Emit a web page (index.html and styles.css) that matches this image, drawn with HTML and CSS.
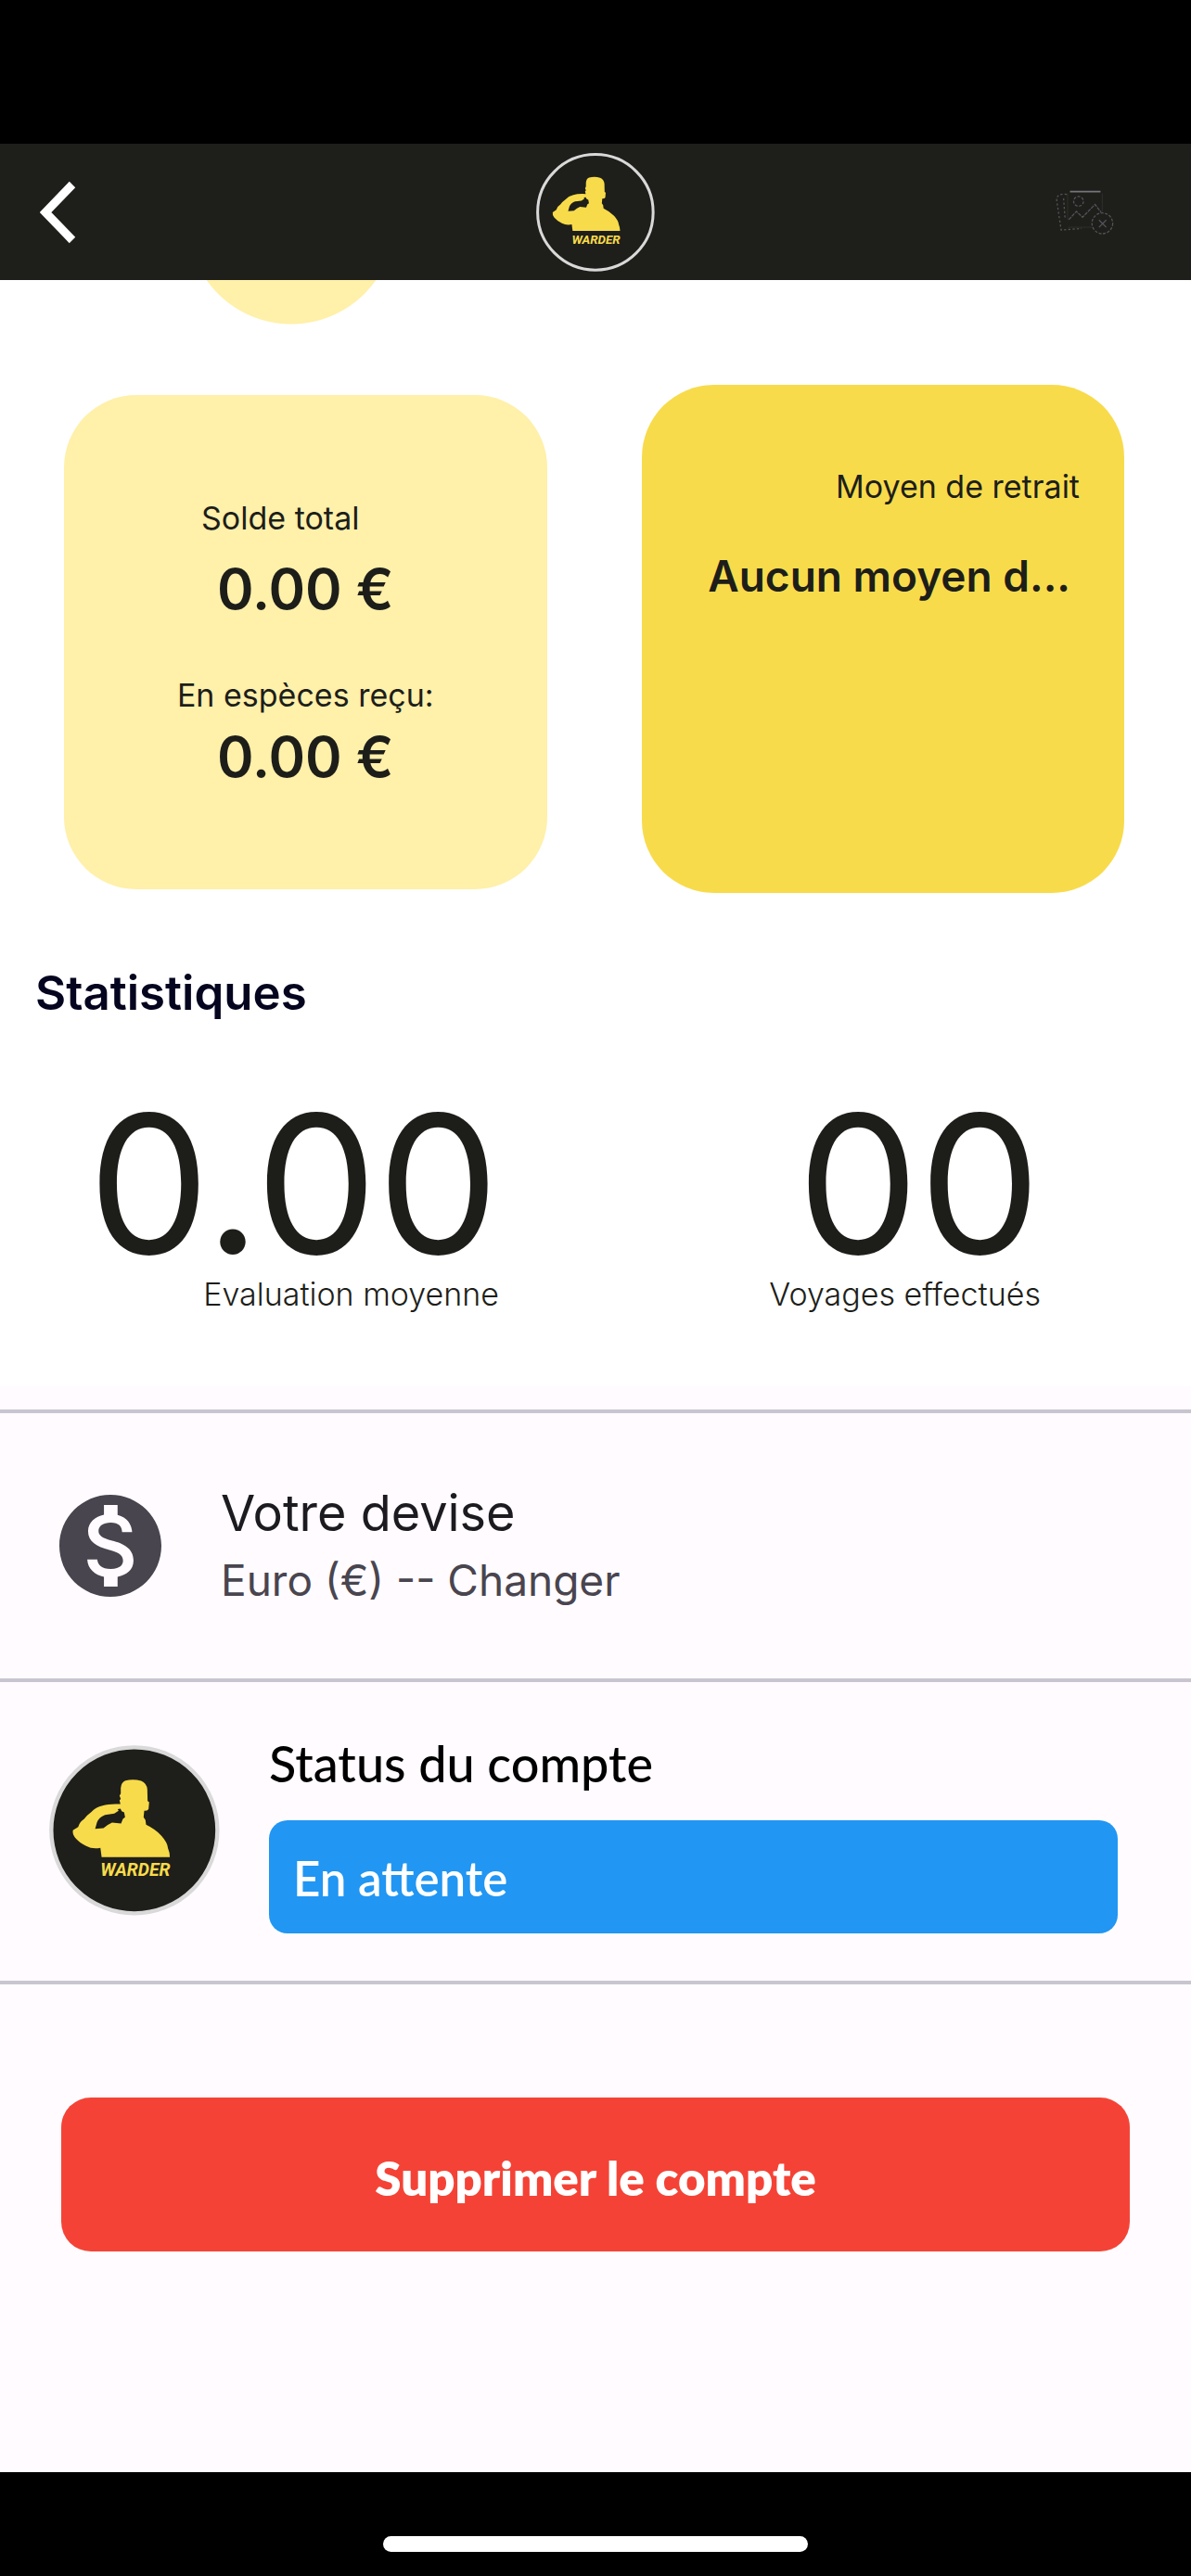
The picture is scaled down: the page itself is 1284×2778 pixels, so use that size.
FILE: index.html
```html
<!DOCTYPE html>
<html lang="fr">
<head>
    <meta charset="UTF-8">
    <meta name="viewport" content="width=device-width, initial-scale=1.0">
    <title>Warder - Mon compte</title>
    <link rel="stylesheet" href="styles.css">
</head>
<body>
    <!-- Shared logo artwork -->
    <svg class="sprite" aria-hidden="true">
        <symbol id="warder" viewBox="38 68 553 553">
            <circle class="logo-disc" cx="314" cy="344" r="269"/>
            <path class="logo-man" d="M208 431 L204 401 Q178 406 158 395 Q135 384 122 368 Q113 357 115 344 L132 333 Q138 315 151 308 Q161 294 174 285 Q189 269 211 264 Q232 257 269 259 L266 247 L270 242 L266 232 L270 225 L270 207 Q271 189 285 183 Q311 176 336 184 Q354 192 356 211 L357 249 L362 253 L360 275 L355 280 L346 281 L344 302 L350 311 L352 326 Q381 340 401 361 Q421 383 423 402 Q429 415 429 431 Z M187 339 L214 337 Q228 325 242 319 L271 322 L277 307 L284 302 L281 286 L273 282 L269 274 L260 275 L263 281 L249 290 L219 294 Q199 302 193 318 Z" fill-rule="evenodd"/>
            <text class="logo-text" x="317" y="492" text-anchor="middle">WARDER</text>
        </symbol>
    </svg>

    <div class="status-bar"></div>

    <header class="app-bar">
        <button class="back" type="button" aria-label="Retour">
            <svg width="39" height="68" viewBox="0 0 39 68"><path d="M35 4 L6 34 L35 64" fill="none" stroke="#fff" stroke-width="9"/></svg>
        </button>
        <svg class="logo" role="img" aria-label="Warder"><use href="#warder"/></svg>
        <svg class="missing" viewBox="78 82 194 152" aria-hidden="true">
            <path d="M128 90 H228" stroke="#77757b" stroke-width="5"/>
            <g fill="none" stroke="#53525a" stroke-width="4">
                <path d="M120 96 V182 M234 96 V156 M122 207 H204" stroke="#2b2b29"/>
                <path d="M118 99 Q80 94 85 122 L99 216 L166 211 M107 112 L112 180" stroke-dasharray="7 7"/>
                <circle cx="156" cy="122" r="16" stroke-dasharray="9 5"/>
                <path d="M124 182 L149 155 L169 174 L210 132 L230 158" stroke-dasharray="12 3"/>
                <circle cx="234" cy="194" r="34" stroke-dasharray="9 5"/>
                <path d="M223 183 L247 207 M247 183 L223 207"/>
            </g>
        </svg>
    </header>

    <main class="content">
        <section class="overview">
            <div class="bubble-clip"><div class="bubble"></div></div>

            <div class="cards">
                <div class="card card-balance">
                    <p class="label label-total">Solde total</p>
                    <p class="amount">0.00 €</p>
                    <p class="label label-cash">En espèces reçu:</p>
                    <p class="amount">0.00 €</p>
                </div>
                <div class="card card-payout">
                    <p class="label">Moyen de retrait</p>
                    <p class="payout">Aucun moyen d...</p>
                </div>
            </div>

            <h2 class="heading">Statistiques</h2>
            <div class="stats">
                <div class="stat">
                    <span class="stat-value">0.00</span>
                    <span class="stat-label">Evaluation moyenne</span>
                </div>
                <div class="stat">
                    <span class="stat-value">00</span>
                    <span class="stat-label">Voyages effectués</span>
                </div>
            </div>
        </section>

        <a class="row row-currency" href="#devise">
            <svg class="coin" viewBox="2 2 20 20" aria-hidden="true"><path d="M12 2C6.48 2 2 6.48 2 12s4.48 10 10 10 10-4.48 10-10S17.52 2 12 2zm1.41 16.09V20h-2.67v-1.93c-1.71-.36-3.16-1.46-3.27-3.4h1.96c.1 1.05.82 1.87 2.65 1.87 1.96 0 2.4-.98 2.4-1.59 0-.83-.44-1.61-2.67-2.14-2.48-.6-4.18-1.62-4.18-3.67 0-1.72 1.39-2.84 3.11-3.21V4h2.67v1.95c1.86.45 2.79 1.86 2.85 3.39H14.3c-.05-1.11-.64-1.87-2.22-1.87-1.5 0-2.4.68-2.4 1.64 0 .84.65 1.39 2.67 1.91s4.18 1.39 4.18 3.91c-.01 1.83-1.38 2.83-3.12 3.16z"/></svg>
            <span class="row-text">
                <span class="row-title">Votre devise</span>
                <span class="row-subtitle">Euro (€) -- Changer</span>
            </span>
        </a>

        <section class="row row-status">
            <svg class="logo logo-large" role="img" aria-label="Warder"><use href="#warder"/></svg>
            <div class="status">
                <h3 class="status-title">Status du compte</h3>
                <p class="status-badge">En attente</p>
            </div>
        </section>

        <button class="delete" type="button">Supprimer le compte</button>
    </main>

    <footer class="home-bar"><span class="home-indicator"></span></footer>
</body>
</html>
```
FILE: styles.css
```css
* {
    box-sizing: border-box;
}

body {
    margin: 0;
    min-height: 100vh;
    display: flex;
    flex-direction: column;
    background: #fffbff;
    color: #1d1e1a;
    font-family: Inter, "Liberation Sans", sans-serif;
}

p, h2, h3 {
    margin: 0;
}

.sprite {
    display: none;
}

/* Top bars */
.status-bar {
    height: 155px;
    background: #000;
}

.app-bar {
    height: 147px;
    padding: 0 43px;
    display: grid;
    grid-template-columns: 1fr auto 1fr;
    align-items: center;
    background: #1e1f1a;
}

.back {
    justify-self: start;
    padding: 0;
    border: 0;
    background: none;
}

.back svg {
    display: block;
}

.logo {
    width: 128px;
    height: 128px;
}

.logo-disc {
    fill: #1e1f1a;
    stroke: #d9d9d9;
    stroke-width: 13px;
}

.logo-man, .logo-text {
    fill: #f8db4b;
}

.logo-text {
    font: italic bold 58px Roboto, sans-serif;
}

.missing {
    justify-self: end;
    width: 64px;
    height: 50px;
    margin-right: 40px;
}

/* Balance and payout */
.overview {
    padding-bottom: 79px;
    background: #fff;
}

.bubble-clip {
    height: 113px;
    padding-left: 202px;
}

.bubble {
    width: 224px;
    height: 48px;
    background: radial-gradient(circle at 50% -64px, #fff0aa 111px, transparent 112px);
}

.cards {
    padding: 0 72px 0 69px;
    display: grid;
    grid-template-columns: 1fr 1fr;
    gap: 102px;
    align-items: start;
}

.card {
    border-radius: 78px;
}

.card-balance {
    margin-top: 11px;
    padding: 113px 40px;
    background: #fff0aa;
    text-align: center;
}

.card-payout {
    min-height: 548px;
    padding: 90px 48px;
    background: #f8db4b;
    text-align: right;
}

.label {
    font-size: 34px;
    line-height: 40px;
}

.label-total {
    margin-bottom: 26px;
    padding-right: 54px;
}

.label-cash {
    margin: 65px 0 16px;
}

.amount {
    font-size: 60px;
    font-weight: 600;
    line-height: 60px;
}

.payout {
    margin-top: 46px;
    padding-right: 10px;
    font-size: 46px;
    font-weight: 600;
    line-height: 60px;
    white-space: nowrap;
}

/* Statistics */
.heading {
    margin: 78px 0 75px;
    padding-left: 38px;
    color: #050520;
    font-size: 51px;
    font-weight: 600;
    line-height: 60px;
}

.stats {
    padding: 0 162px 0 95px;
    display: flex;
    justify-content: space-between;
}

.stat {
    display: flex;
    flex-direction: column;
    align-items: flex-end;
}

.stat-value {
    font-size: 208px;
    line-height: 200px;
}

.stat-label {
    font-size: 34px;
    font-weight: 300;
    line-height: 40px;
}

/* Account rows */
.row {
    display: flex;
    align-items: center;
    border-bottom: 4px solid #c9c5d0;
}

.row-currency {
    margin-top: 25px;
    padding: 76px 64px;
    gap: 64px;
    border-top: 4px solid #c9c5d0;
    color: #1c1b1f;
    text-decoration: none;
}

.coin {
    width: 110px;
    height: 110px;
    fill: #49454f;
}

.row-text {
    display: flex;
    flex-direction: column;
    gap: 10px;
}

.row-title {
    font-size: 54px;
    line-height: 64px;
}

.row-subtitle {
    color: #49454f;
    font-size: 46px;
    line-height: 60px;
}

.row-status {
    padding: 56px 79px 51px 53px;
    gap: 53px;
    align-items: flex-start;
}

.logo-large {
    width: 184px;
    height: 184px;
    margin-top: 12px;
}

.status {
    flex: 1;
    font-family: Lato, sans-serif;
}

.status-title {
    margin-bottom: 29px;
    color: #000;
    font-size: 54px;
    font-weight: 500;
    line-height: 64px;
}

.status-badge {
    padding: 31px 26px 27px;
    border-radius: 20px;
    background: #2196f3;
    color: #fff;
    font-size: 51px;
    font-weight: 600;
    line-height: 64px;
}

.delete {
    display: block;
    width: calc(100% - 132px);
    height: 166px;
    margin: 122px 66px;
    padding: 6px 0 0;
    border: 0;
    border-radius: 32px;
    background: #f44336;
    color: #fff;
    font-family: Lato, sans-serif;
    font-size: 51px;
    font-weight: 800;
}

/* Bottom bar */
.home-bar {
    height: 112px;
    margin-top: auto;
    padding-top: 69px;
    background: #000;
}

.home-indicator {
    display: block;
    width: 458px;
    max-width: 60%;
    height: 17px;
    margin: 0 auto;
    border-radius: 9px;
    background: #fff;
}
```
